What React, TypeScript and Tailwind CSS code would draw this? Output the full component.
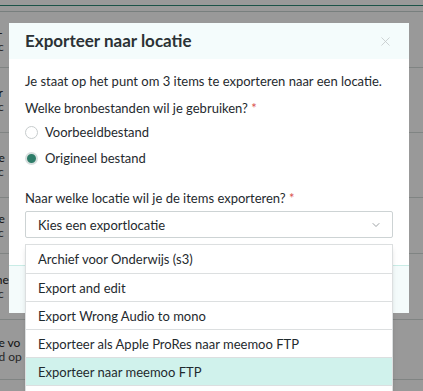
import { ChevronDown, X } from "lucide-react";

const bgRows = [
  { a: "st.-", b: "agc", h: "h-[56px]" },
  { a: "kor", b: "agc", h: "h-[65px]" },
  { a: "rsie", b: "agc", h: "h-[65px]" },
  { a: "rsie", b: "agc", h: "h-[56px]" },
  { a: "n ne", b: "agc", h: "h-[66px]" },
  { a: "rsie vo", b: "egd op", h: "h-[60px]" },
];

const options = [
  "Archief voor Onderwijs (s3)",
  "Export and edit",
  "Export Wrong Audio to mono",
  "Exporteer als Apple ProRes naar meemoo FTP",
  "Exporteer naar meemoo FTP",
  "Exporteer naar VRT",
];

const App = () => {
  return (
    <div
      className="relative w-[423px] h-[391px] overflow-hidden bg-white text-[#1f2a2e]"
      style={{ fontFamily: "Lato, 'Open Sans', sans-serif" }}
    >
      {/* page behind the modal */}
      <div className="flex flex-col">
        <div className="h-[5px]" />
        <div className="h-px bg-[#2f8a78]" />
        <div className="h-[5px]" />
        <div className="h-px bg-[#c9d4d2]" />
        {bgRows.map((r, i) => (
          <div
            key={i}
            className={
              r.h +
              " flex flex-col justify-center border-b border-[#d6dcdb] text-[12px] leading-[14px] -ml-[14px]"
            }
          >
            <span className="text-[#222]">{r.a}</span>
            <span className="text-[#444]">{r.b}</span>
          </div>
        ))}
      </div>

      <div className="absolute inset-0 bg-black/40" />

      {/* modal */}
      <div className="absolute left-[9px] top-[23px] w-[400px] h-[290px] bg-white flex flex-col">
        <div className="h-[36px] bg-[#f4fcfc] flex items-center justify-between px-4">
          <h2 className="text-[17px] font-bold text-[#2b3235]">Exporteer naar locatie</h2>
          <X className="w-[15px] h-[15px] text-[#c4c9ca]" strokeWidth={1.3} />
        </div>
        <div className="flex-1 flex flex-col px-4 pt-[12px] text-[13px] leading-[20px]">
          <p>Je staat op het punt om 3 items te exporteren naar een locatie.</p>
          <p className="mt-[7px]">
            Welke bronbestanden wil je gebruiken? <span className="text-[#d9534f]">*</span>
          </p>
          <label className="flex items-center gap-[7px] mt-[4px]">
            <span className="w-[13px] h-[13px] rounded-full border border-[#c7cccd] bg-white" />
            Voorbeeldbestand
          </label>
          <label className="flex items-center gap-[7px] mt-[6px]">
            <span className="w-[13px] h-[13px] rounded-full border-[2px] border-[#d6dedd] bg-[#2e7d69]" />
            Origineel bestand
          </label>
          <p className="mt-[20px]">
            Naar welke locatie wil je de items exporteren? <span className="text-[#d9534f]">*</span>
          </p>
          <div className="relative mt-[3px]">
            <div className="h-[27px] border border-[#cdd3d4] rounded-[2px] flex items-center justify-between pl-3 pr-[10px]">
              <span>Kies een exportlocatie</span>
              <ChevronDown className="w-[12px] h-[12px] text-[#7b8285]" strokeWidth={1.5} />
            </div>
            <div className="absolute left-0 right-0 top-[33px] z-10 bg-white border border-[#dcdfe0] shadow-md">
              {options.map((o, i) => (
                <div
                  key={o}
                  className={
                    "h-[28px] flex items-center pl-3 " +
                    (i > 0 ? "border-t border-[#dcdfe0] " : "") +
                    (i === 4 ? "bg-[#d0f2ec]" : "")
                  }
                >
                  {o}
                </div>
              ))}
            </div>
          </div>
        </div>
        <div className="h-[48px] bg-[#f4fbfb] border-t border-[#c9ece6]" />
      </div>
    </div>
  );
};

export default App;
